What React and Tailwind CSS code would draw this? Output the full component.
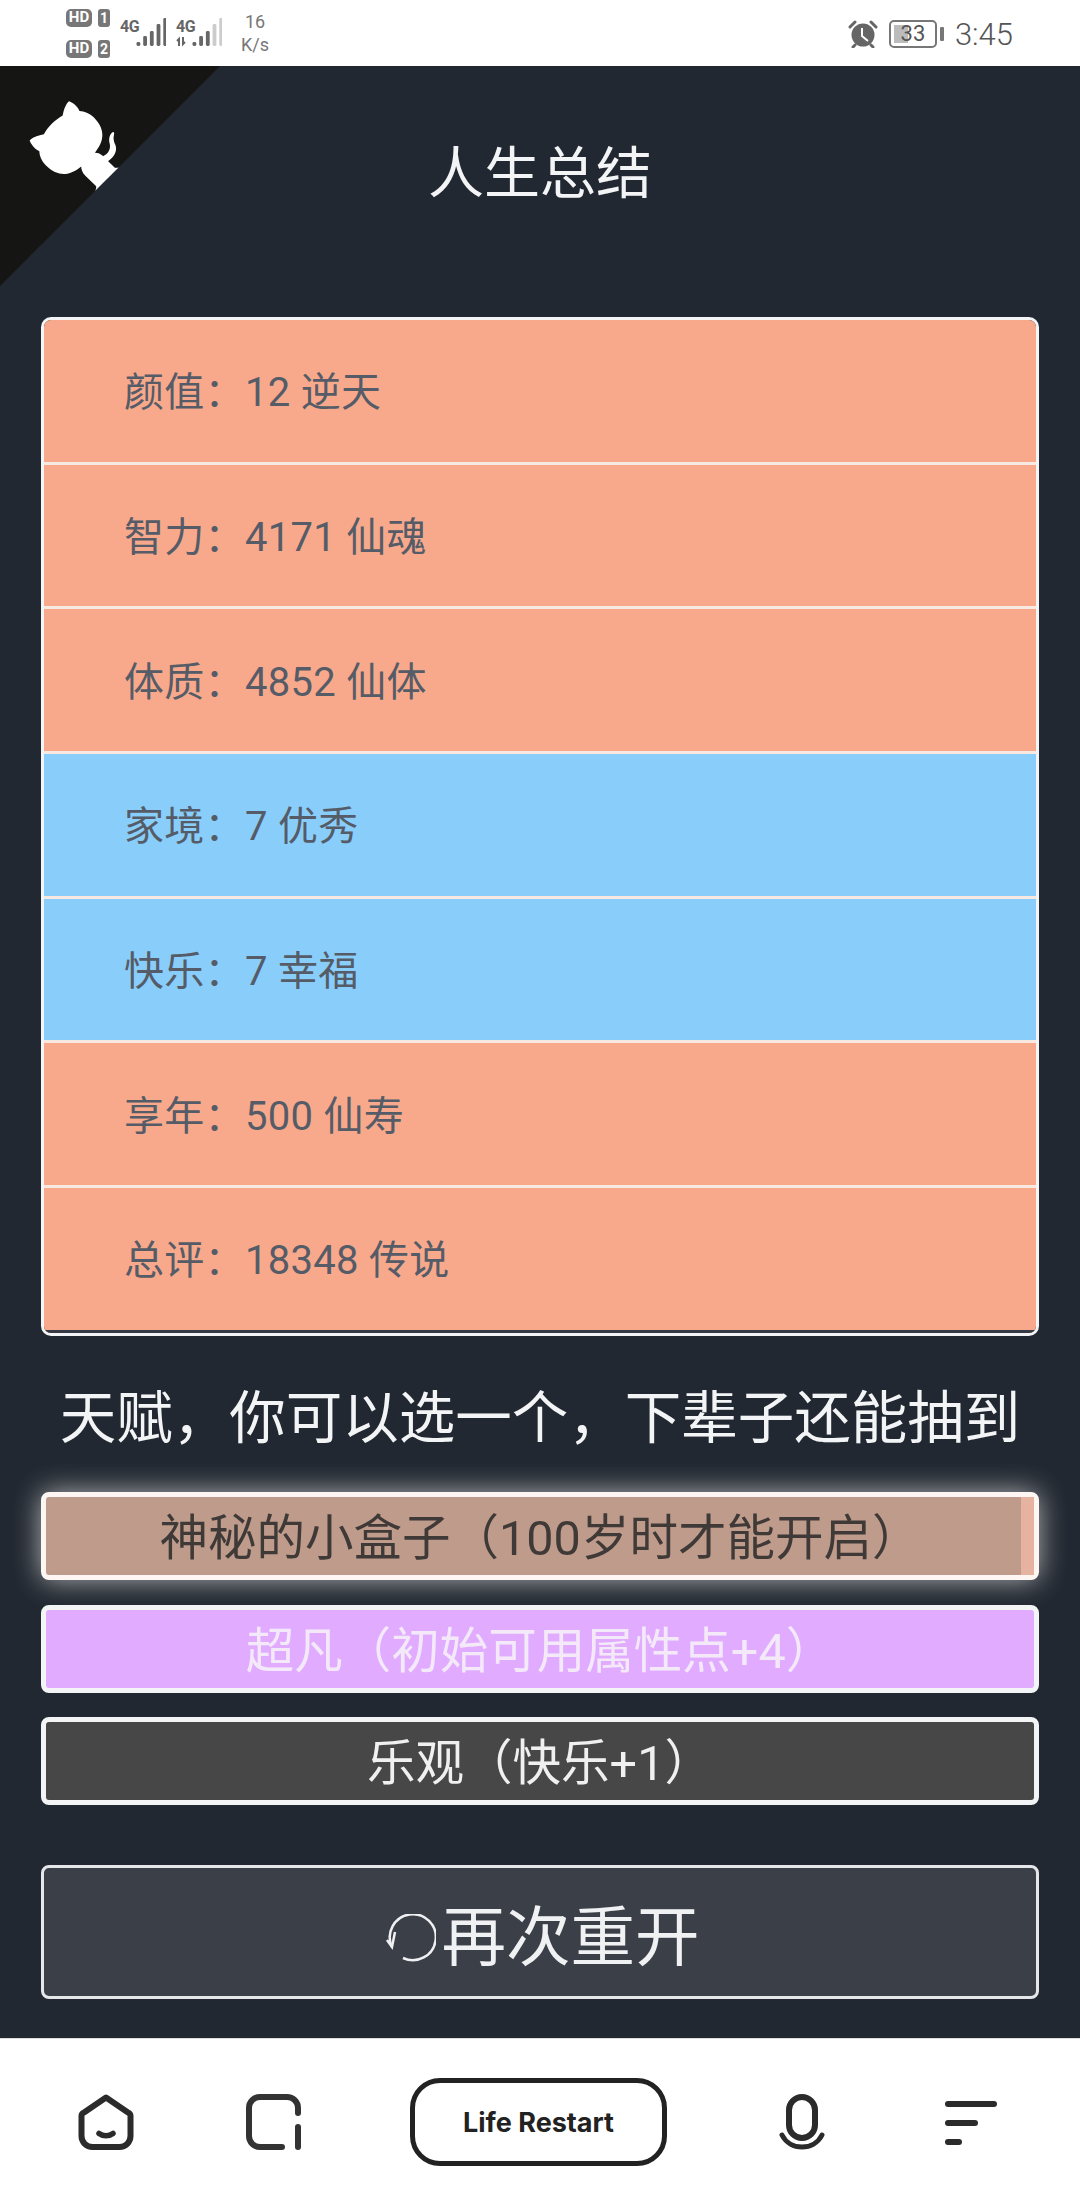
const cjk = 'font-["Roboto","Noto_Sans_CJK_SC",sans-serif]';

const properties = [
  { label: '颜值：', value: '12 逆天', bg: 'bg-[#F8A98B]' },
  { label: '智力：', value: '4171 仙魂', bg: 'bg-[#F8A98B]' },
  { label: '体质：', value: '4852 仙体', bg: 'bg-[#F8A98B]' },
  { label: '家境：', value: '7 优秀', bg: 'bg-[#89CEFB]' },
  { label: '快乐：', value: '7 幸福', bg: 'bg-[#89CEFB]' },
  { label: '享年：', value: '500 仙寿', bg: 'bg-[#F8A98B]' },
  { label: '总评：', value: '18348 传说', bg: 'bg-[#F8A98B]' },
];

const SimBadge = ({ n }) => (
  <div className="flex items-center gap-[6px] h-[18px]">
    <span className="flex items-center justify-center w-[26px] h-[18px] rounded-[5px] bg-[#777] text-white text-[15px] leading-none font-bold font-['Roboto',sans-serif]">
      HD
    </span>
    <span className="flex items-center justify-center w-[12px] h-[18px] rounded-[3px] bg-[#777] text-white text-[14px] leading-none font-bold font-['Roboto',sans-serif]">
      {n}
    </span>
  </div>
);

const Signal = ({ levels, arrows }) => (
  <div className="relative flex items-end w-[46px] h-[30px]">
    <span className="absolute left-0 top-[1px] text-[16px] leading-none font-bold tracking-tight text-[#666] font-['Roboto',sans-serif]">
      4G
    </span>
    <svg width="46" height="30" viewBox="0 0 46 30">
      {arrows && <path d="M3 28v-7l-2 2M7 19v7l2-2" fill="none" stroke="#666" strokeWidth="2" />}
      {[0, 1, 2, 3, 4].map((i) => (
        <rect
          key={i}
          x={16.5 + i * 6.7}
          y={[24, 18, 13, 6, 0][i]}
          width="3.800"
          height={[4, 10, 15, 22, 28][i]}
          rx="1.400"
          fill={i < levels ? '#666' : '#ccc'}
        />
      ))}
    </svg>
  </div>
);

const StatusBar = () => (
  <div className="h-[66px] bg-white flex items-center justify-between pl-[66px] pr-[67px]">
    <div className="flex items-center">
      <div className="flex flex-col gap-[13px]">
        <SimBadge n="1" />
        <SimBadge n="2" />
      </div>
      <div className="flex gap-[10px] ml-[10px]">
        <Signal levels={5} />
        <Signal levels={3} arrows />
      </div>
      <div className="flex flex-col items-center ml-[19px] text-[#777] text-[18px] leading-[23px] font-['Roboto',sans-serif]">
        <span>16</span>
        <span>K/s</span>
      </div>
    </div>
    <div className="flex items-center pt-[2px]">
      <svg width="30" height="28" viewBox="0 0 30 28">
        <circle cx="15" cy="15" r="11.500" fill="#666" />
        <path d="M14 8v8l6 5" fill="none" stroke="#fff" strokeWidth="2" />
        <path d="M2 7l5-5M28 7l-5-5" stroke="#666" strokeWidth="3" strokeLinecap="round" />
        <path d="M7 25l-2 2M23 25l2 2" stroke="#666" strokeWidth="3" strokeLinecap="round" />
      </svg>
      <div className="flex items-center ml-[11px]">
        <div className="relative flex items-center justify-center w-[48px] h-[28px] rounded-[5px] border-[2px] border-[#777] overflow-hidden">
          <span className="absolute left-[3px] top-[3px] bottom-[3px] w-[14px] bg-[#bbb]" />
          <span className="relative text-[22px] leading-none text-[#555] font-['Roboto',sans-serif]">33</span>
        </div>
        <span className="w-[4px] h-[14px] ml-[3px] rounded-[1px] bg-[#777]" />
      </div>
      <span className="ml-[11px] text-[31px] leading-none font-light text-[#555] font-['Roboto',sans-serif]">3:45</span>
    </div>
  </div>
);

const GithubCorner = () => (
  <svg width="220" height="220" viewBox="0 0 250 250" className="absolute top-0 left-0 -scale-x-100 text-white">
    <path d="M0,0 L115,115 L130,115 L142,142 L250,250 L250,0 Z" fill="#151513" />
    <path
      d="M128.3,109.0 C113.8,99.7 119.0,89.6 119.0,89.6 C122.0,82.7 120.5,78.6 120.5,78.6 C119.2,72.0 123.4,76.3 123.4,76.3 C127.3,80.9 125.5,87.3 125.5,87.3 C122.9,97.6 130.6,101.9 134.4,103.2"
      fill="currentColor"
    />
    <path
      d="M115.0,115.0 C114.9,115.1 118.7,116.5 119.8,115.4 L133.7,101.6 C136.9,99.2 139.9,98.4 142.2,98.6 C133.8,88.0 127.5,74.4 143.8,58.0 C148.5,53.4 154.0,51.2 159.7,51.0 C160.3,49.4 163.2,43.6 171.4,40.1 C171.4,40.1 176.1,42.5 178.8,56.2 C183.1,58.6 187.2,61.8 190.9,65.4 C194.5,69.0 197.7,73.2 200.1,77.6 C213.8,80.2 216.3,84.9 216.3,84.9 C212.7,93.1 206.9,96.0 205.4,96.6 C205.1,102.4 203.0,107.8 198.3,112.5 C181.9,128.9 168.3,122.5 157.7,114.1 C157.9,116.9 156.7,120.9 152.7,124.9 L141.0,136.5 C139.8,137.7 141.6,141.9 141.8,141.8 Z"
      fill="currentColor"
    />
  </svg>
);

const BottomNav = () => (
  <div className="h-[166px] bg-white border-t border-[#ddd] flex items-center pl-[78px]">
    {/* home */}
    <svg width="56" height="56" viewBox="0 0 56 56" fill="none" stroke="#2b2b2b" strokeWidth="6" strokeLinecap="round" strokeLinejoin="round">
      <path d="M28 3.500L6 18.500a4 4 0 0 0-2.500 4V42a11 11 0 0 0 11 11h27a11 11 0 0 0 11-11V22.500a4 4 0 0 0-2.500-4z" />
      <path d="M21 39.500c4 3 10 3 14 0" strokeWidth="5.500" />
    </svg>
    {/* window */}
    <svg className="ml-[112px]" width="56" height="56" viewBox="0 0 56 56" fill="none" stroke="#333" strokeWidth="6" strokeLinecap="round" strokeLinejoin="round">
      <path d="M52 19V14A11 11 0 0 0 41 3H14A11 11 0 0 0 3 14V42A11 11 0 0 0 14 53H36" />
      <path d="M52 33V53" />
    </svg>
    <div className="ml-[108px] flex items-center justify-center w-[257px] h-[88px] pt-[3px] rounded-[30px] border-[5px] border-[#222] text-[27px] font-bold text-[#222] font-['Inter',sans-serif]">
      Life Restart
    </div>
    {/* mic */}
    <svg className="ml-[107px]" width="56" height="56" viewBox="0 0 56 56" fill="none" stroke="#2b2b2b" strokeWidth="6" strokeLinecap="round">
      <rect x="15" y="3" width="26" height="41" rx="13" />
      <path d="M8 41c4 8 12 12 20 12s16-4 20-12" strokeWidth="5" />
    </svg>
    {/* menu */}
    <svg className="ml-[112px]" width="56" height="56" viewBox="0 0 56 56" fill="none" stroke="#2b2b2b" strokeWidth="6" strokeLinecap="round">
      <path d="M6 10H52M6 29H33M6 48H17" />
    </svg>
  </div>
);

const App = () => {
  return (
    <div className={`w-[1080px] h-[2204px] flex flex-col overflow-hidden bg-[#222831] ${cjk}`}>
      <StatusBar />

      <div className="relative flex-1 px-[41px]">
        <GithubCorner />

        <h1 className="pt-[68px] pb-[103px] text-center text-[56px] leading-[80px] font-normal text-[#f3f4f6]">
          人生总结
        </h1>

        {/* summary table */}
        <div className="border-[3px] border-[#f3f4f6] rounded-[10px] overflow-hidden">
          {properties.map((p, i) => (
            <div
              key={p.label}
              className={`${p.bg} h-[144.700px] flex items-center pl-[80px] pt-[5px] tracking-[0.3px] text-[40px] text-[#555c68] border-b-[3px] ${i === properties.length - 1 ? 'border-[#353a45]' : 'border-[#f7e9e2]'}`}
            >
              {p.label}
              {p.value}
            </div>
          ))}
        </div>

        <p className="mt-[47px] mb-[37px] text-center text-[56.500px] leading-[72px] text-[#f3f4f6] whitespace-nowrap">
          天赋，你可以选一个，下辈子还能抽到
        </p>

        {/* talents */}
        <div className="relative flex items-center justify-center h-[88px] pt-[7px] rounded-[8px] border-[5px] border-[#fdf6f3] bg-[#BF9B8B] text-[48.500px] text-[#3f3a37] shadow-[0_0_28px_rgba(255,255,255,0.65)]">
          <span className="absolute top-0 bottom-0 right-0 w-[13px] bg-[#E6B3A0]" />
          神秘的小盒子（100岁时才能开启）
        </div>
        <div className="mt-[25px] flex items-center justify-center h-[88px] pt-[7px] rounded-[8px] border-[5px] border-[#f3f4f6] bg-[#E1ABFF] text-[48.500px] text-[#f3e9f8]">
          超凡（初始可用属性点+4）
        </div>
        <div className="mt-[24px] flex items-center justify-center h-[88px] pt-[7px] rounded-[8px] border-[5px] border-[#f3f4f6] bg-[#474747] text-[48.500px] text-[#f0f0f0]">
          乐观（快乐+1）
        </div>

        <button className="mt-[60px] w-full h-[134px] flex items-center justify-center pt-[14px] pl-[2px] rounded-[8px] border-[3px] border-[#e5e7eb] bg-[#3B3F48] text-[64.500px] text-[#f0f1f3]">
          <svg className="mr-[5px]" width="54" height="50" viewBox="0 0 54 50" fill="none" stroke="#f0f1f3" strokeWidth="2.500">
            <path d="M21 44A23 23 0 1 0 10 33" />
            <path d="M5 26L10 33L13 18" />
          </svg>
          再次重开
        </button>
      </div>

      <BottomNav />
    </div>
  );
};

export default App;
